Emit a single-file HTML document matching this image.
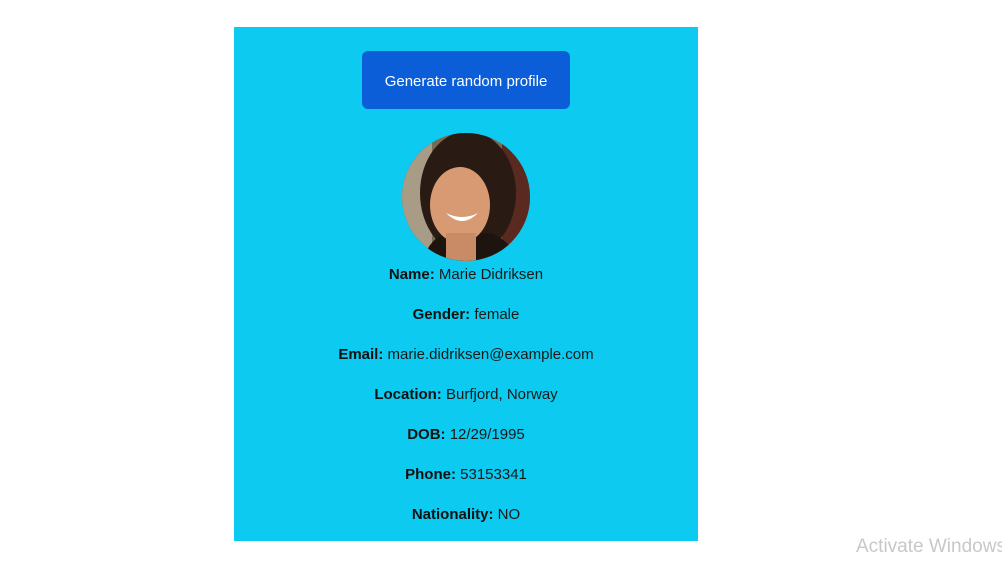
<!DOCTYPE html>
<html><head><style>
body{margin:0;width:1002px;height:565px;background:#fff;position:relative;overflow:hidden;font-family:"Liberation Sans",sans-serif;}
.card{position:absolute;left:234px;top:27px;width:464px;height:514px;background:#0dcaf0;}
.btn{position:absolute;left:128px;top:24px;width:208px;height:58px;background:#0b5ed7;border-radius:6px;color:#fff;font-size:15px;line-height:62px;text-align:center;}
.av{position:absolute;left:168px;top:106px;width:128px;height:128px;border-radius:50%;overflow:hidden;background:#6b5a48;}
.line{position:absolute;left:0;width:464px;text-align:center;font-size:15px;color:#1a1a1a;}
.line b{color:#111}
.wm{position:absolute;left:856px;top:536px;font-size:19px;color:#c8c8c8;white-space:nowrap;}
</style></head><body>
<div class="card">
<div class="btn">Generate random profile</div>
<div class="av"><svg width="128" height="128" viewBox="0 0 128 128">
<rect width="128" height="128" fill="#7a6a55"/>
<rect x="0" y="0" width="30" height="128" fill="#a89c86"/>
<rect x="100" y="0" width="28" height="128" fill="#5a2a20"/>
<ellipse cx="66" cy="60" rx="48" ry="62" fill="#2a1a14"/>
<path d="M20 128 Q30 100 50 100 L90 100 Q110 110 118 128Z" fill="#1d1410"/>
<ellipse cx="58" cy="72" rx="30" ry="38" fill="#d79a72"/>
<path d="M30 50 Q55 20 92 45 L90 30 Q60 10 30 35Z" fill="#2a1a14"/>
<path d="M44 80 Q60 96 76 80 Q60 88 44 80Z" fill="#fff"/>
<rect x="44" y="100" width="30" height="28" fill="#c98b66"/>
</svg></div>
<div class="line" style="top:239px"><b>Name:</b> Marie Didriksen</div>
<div class="line" style="top:279px"><b>Gender:</b> female</div>
<div class="line" style="top:319px"><b>Email:</b> marie.didriksen@example.com</div>
<div class="line" style="top:359px"><b>Location:</b> Burfjord, Norway</div>
<div class="line" style="top:399px"><b>DOB:</b> 12/29/1995</div>
<div class="line" style="top:439px"><b>Phone:</b> 53153341</div>
<div class="line" style="top:479px"><b>Nationality:</b> NO</div>
</div>
<div class="wm">Activate Windows</div>
</body></html>
